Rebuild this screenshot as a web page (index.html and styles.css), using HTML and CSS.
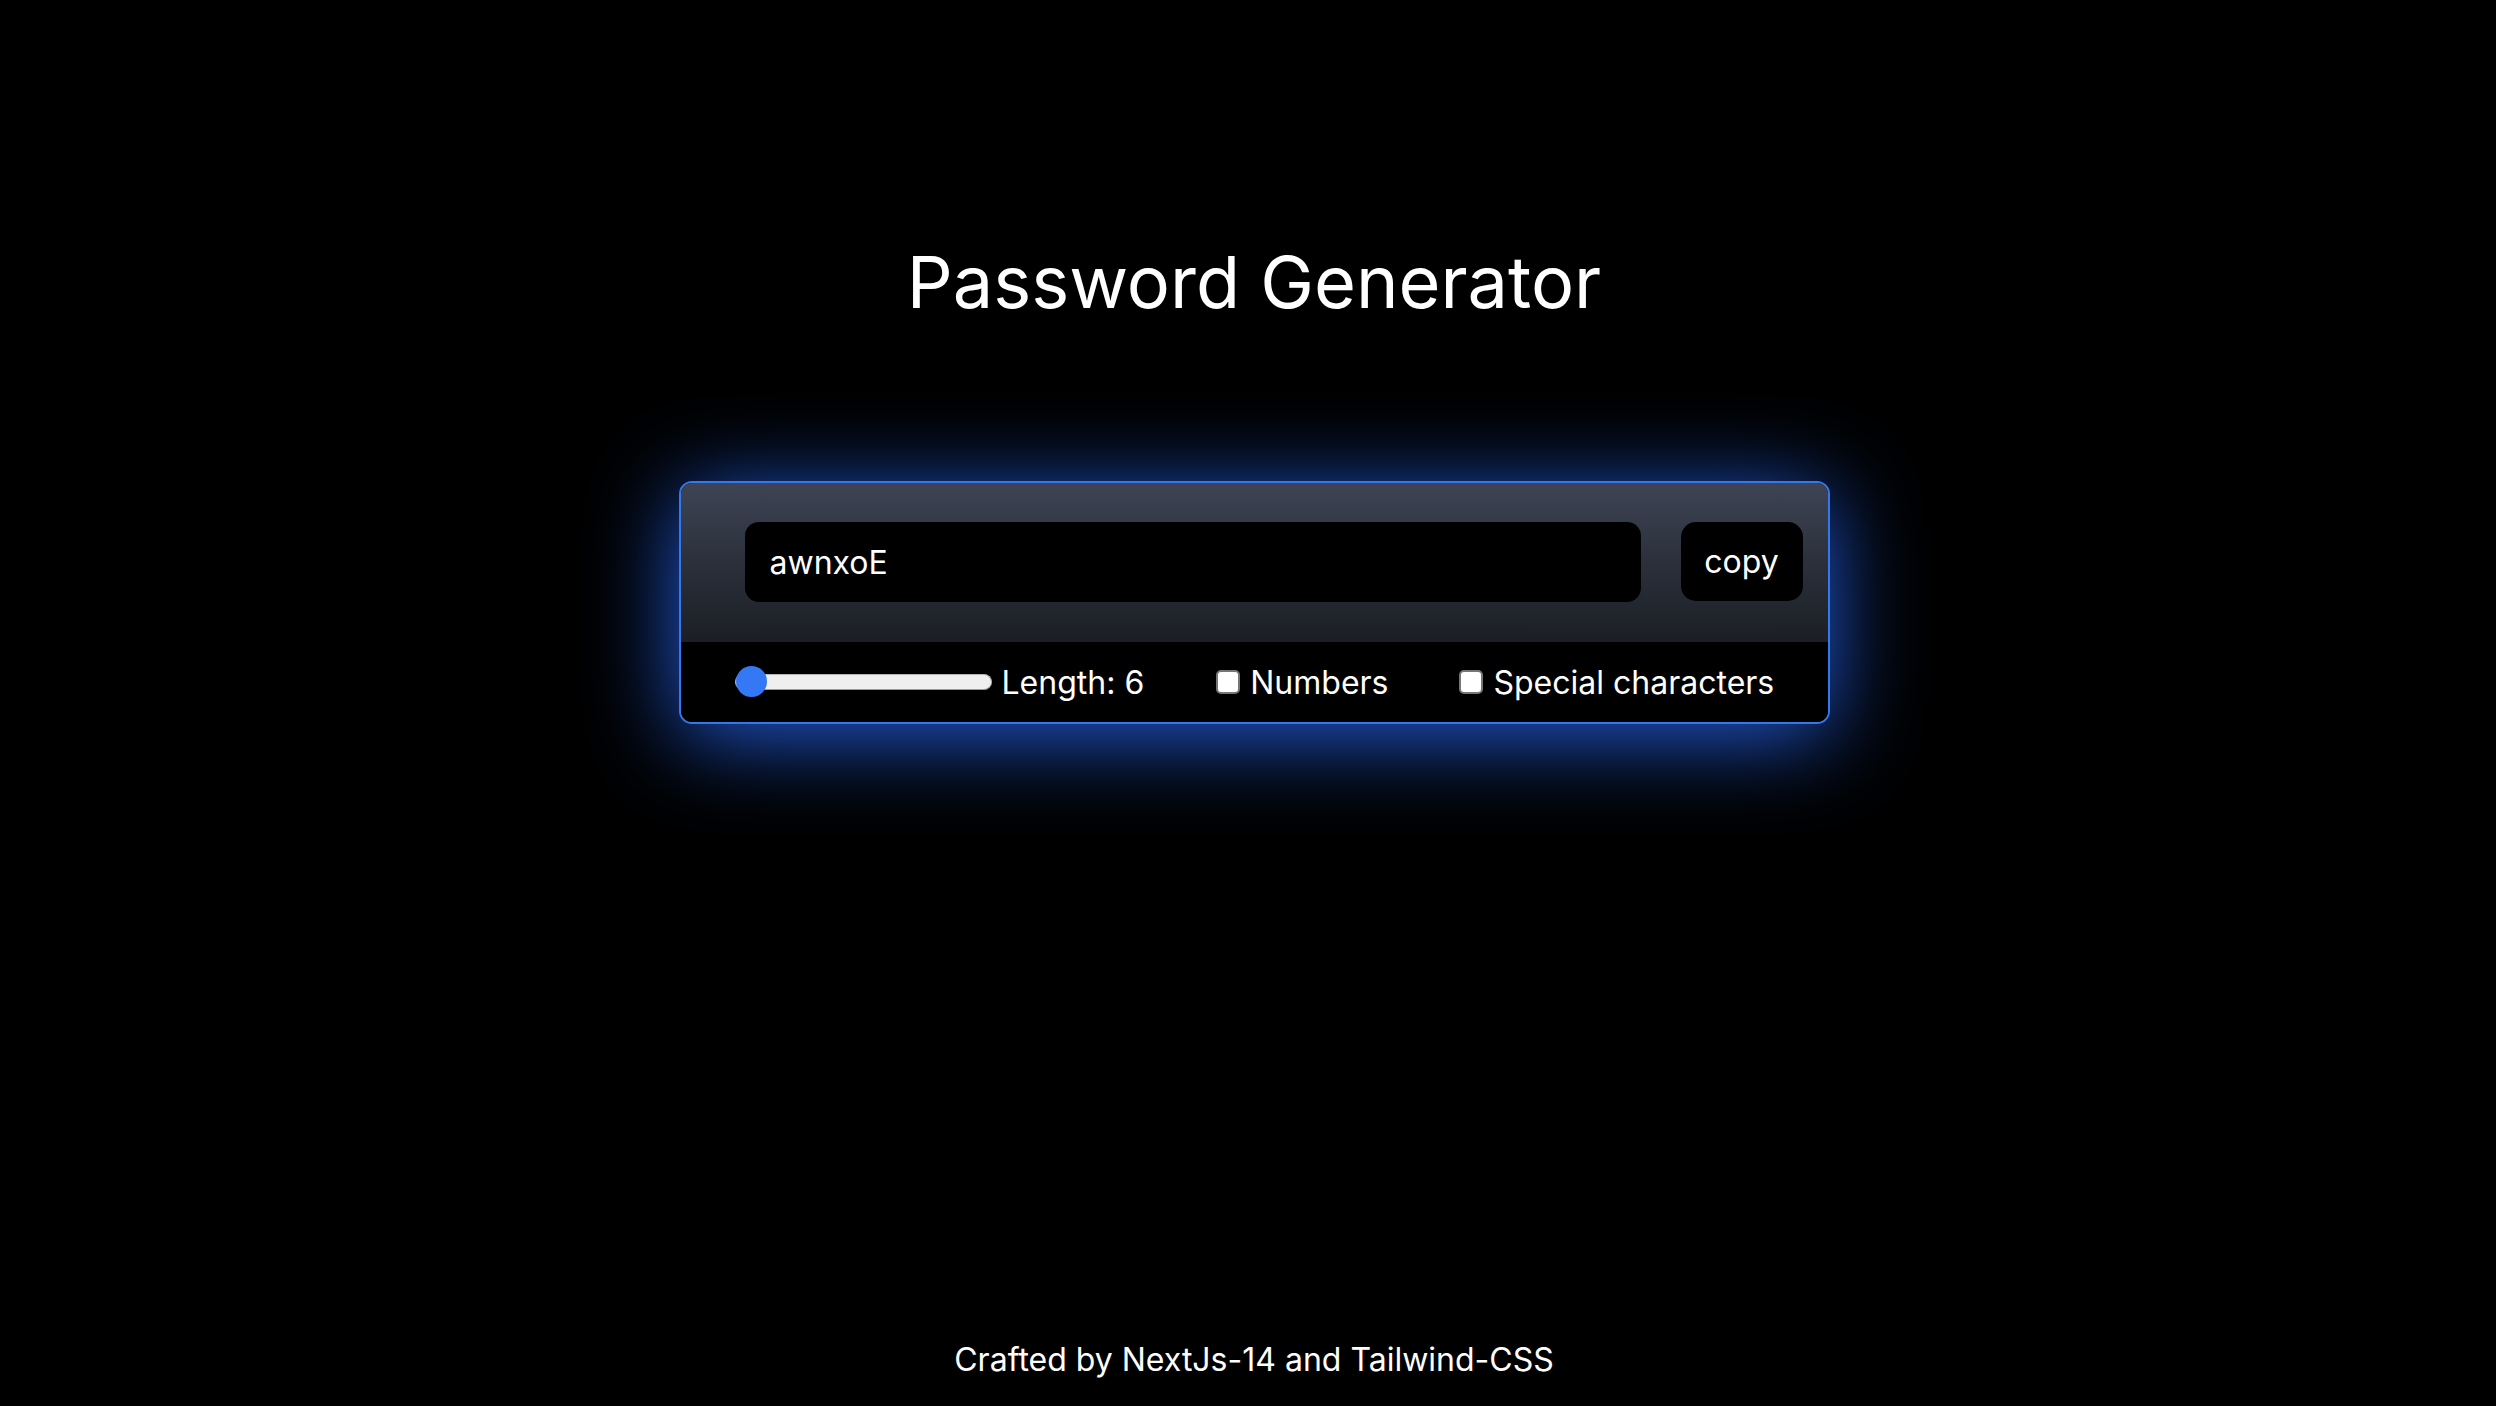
FILE: index.html
```html
<!DOCTYPE html>
<html lang="en">
<head>
<meta charset="utf-8">
<title>Password Generator</title>
<link rel="stylesheet" href="styles.css">
</head>
<body>
<main class="page">
  <h1 class="title">Password Generator</h1>
  <section class="card">
    <div class="card-top">
      <input class="pw" type="text" value="awnxoE" readonly>
      <button class="copy" type="button">copy</button>
    </div>
    <div class="card-bottom">
      <input class="range" type="range" min="6" max="100" value="6">
      <label class="len">Length: 6</label>
      <label class="opt opt-num"><input class="cb" type="checkbox"><span>Numbers</span></label>
      <label class="opt opt-spec"><input class="cb" type="checkbox"><span>Special characters</span></label>
    </div>
  </section>
  <footer class="footer">Crafted by NextJs-14 and Tailwind-CSS</footer>
</main>
</body>
</html>
```
FILE: styles.css
```css
* { box-sizing: border-box; }
html, body { margin: 0; padding: 0; background: #000; }
body {
  font-family: Inter, "Noto Sans", "Liberation Sans", sans-serif;
  color: #fff;
}
.page {
  min-height: 100vh;
  display: flex;
  flex-direction: column;
  align-items: center;
  padding: 246px 0 22px 12px;
}
.title {
  margin: 0;
  font-size: 72px;
  line-height: 1;
  font-weight: 400;
  color: #fff;
}
.card {
  margin-top: 163px;
  width: 1151px;
  border: 2px solid #3477ee;
  border-radius: 13px;
  overflow: hidden;
  box-shadow: 0 12px 90px 0 rgba(37, 99, 235, 0.95);
  background: #000;
}
.card-top {
  display: flex;
  gap: 40px;
  padding: 39px 25px 40px 64px;
  background: linear-gradient(to bottom, #3e4454 0%, #2b303b 50%, #1b1e24 100%);
}
.pw {
  flex: 1;
  height: 80px;
  border: 0;
  outline: none;
  border-radius: 14px;
  background: #000;
  color: #fff;
  font-family: inherit;
  font-size: 32px;
  padding: 0 0 0 25px;
}
.copy {
  width: 122px;
  height: 79px;
  border: 0;
  border-radius: 15px;
  background: #000;
  color: #fff;
  font-family: inherit;
  font-size: 32px;
  padding: 0;
}
.card-bottom {
  height: 80px;
  display: flex;
  align-items: center;
  padding-left: 54px;
  background: #000;
}
.range {
  -webkit-appearance: none;
  appearance: none;
  width: 257px;
  height: 31px;
  margin: 0;
  background: transparent;
}
.range::-webkit-slider-runnable-track {
  height: 16px;
  border-radius: 8px;
  background: #efefef;
  border: 1.5px solid #b4b4b4;
  border-bottom-color: #9a9a9a;
}
.range::-webkit-slider-thumb {
  -webkit-appearance: none;
  appearance: none;
  width: 31px;
  height: 31px;
  border-radius: 50%;
  background: #3478f6;
  border: 0;
  margin-top: -9px;
}
.len {
  margin-left: 10px;
  font-size: 32px;
}
.opt {
  display: flex;
  align-items: center;
  gap: 10px;
  font-size: 32px;
}
.opt-num { margin-left: 72px; }
.opt-spec { margin-left: 71px; }
.cb {
  -webkit-appearance: none;
  appearance: none;
  width: 24px;
  height: 24px;
  margin: 0;
  background: #fff;
  border: 2px solid #767676;
  border-radius: 5px;
}
.footer {
  margin-top: auto;
  font-size: 32px;
  line-height: 1.5;
}
```
